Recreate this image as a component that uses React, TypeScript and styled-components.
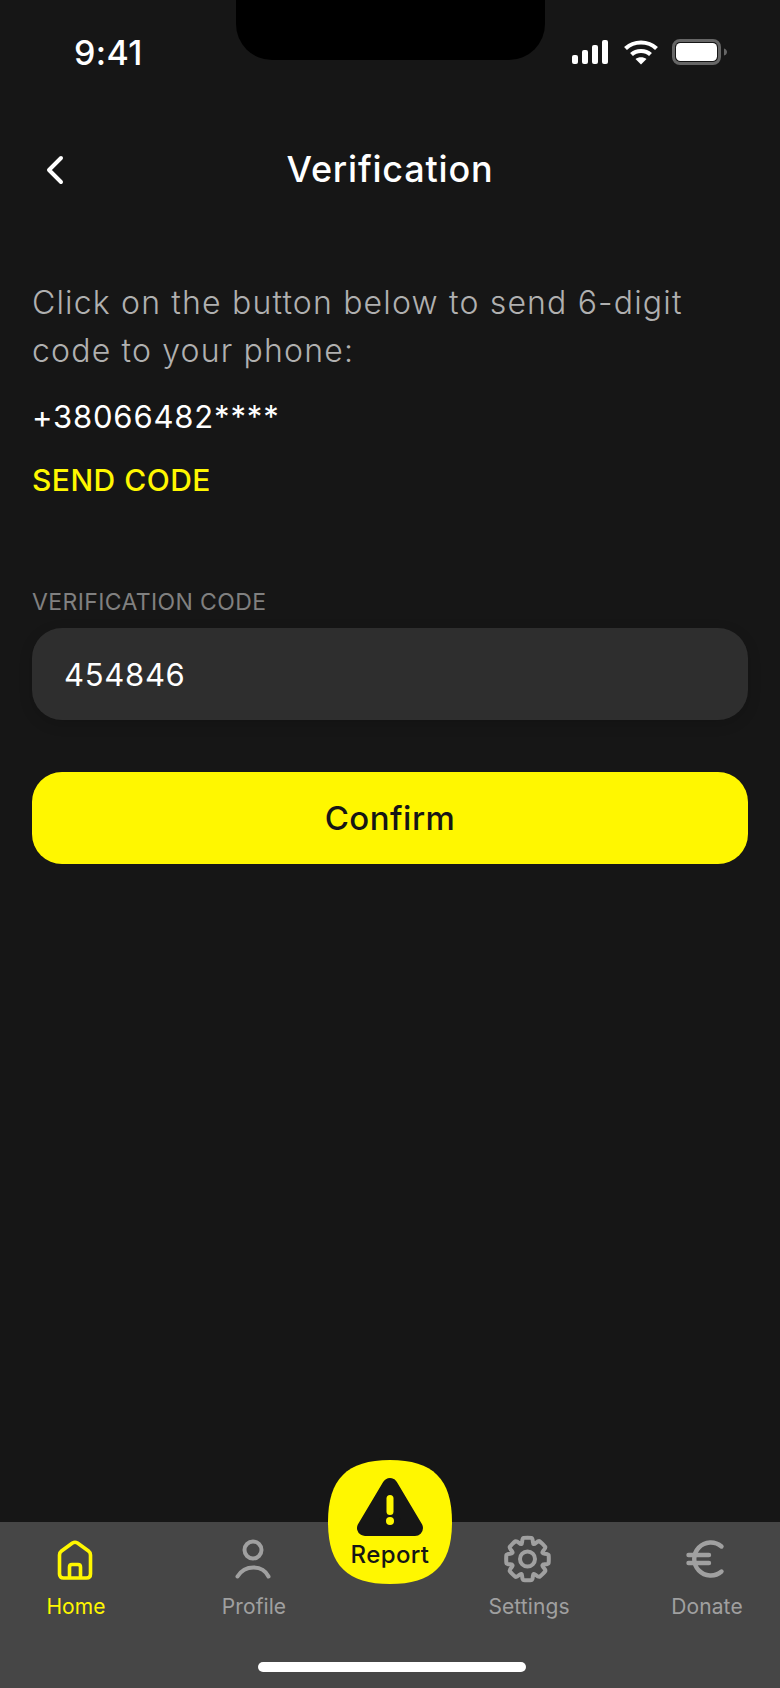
import styled, { createGlobalStyle } from "styled-components";

const YELLOW = "#fff700";
const MUTED = "#a0a0a0";

const GlobalStyle = createGlobalStyle`
  html, body {
    margin: 0;
    padding: 0;
    background: #161616;
  }
  * {
    box-sizing: border-box;
  }
`;

const Page = styled.div`
  position: relative;
  display: flex;
  flex-direction: column;
  width: 780px;
  height: 1688px;
  overflow: hidden;
  background: #161616;
  color: #fff;
  font-family: Inter, "Open Sans", sans-serif;
`;

const Notch = styled.div`
  position: absolute;
  top: 0;
  left: 236px;
  width: 309px;
  height: 60px;
  background: #000;
  border-radius: 0 0 36px 36px;
`;

const StatusBar = styled.div`
  display: flex;
  align-items: center;
  justify-content: space-between;
  height: 104px;
  padding: 0 52px 0 74px;
`;

const Clock = styled.span`
  font-size: 34px;
  font-weight: 500;
  letter-spacing: 0.4px;
`;

const StatusIcons = styled.div`
  display: flex;
  align-items: center;
`;

const Header = styled.header`
  position: relative;
  display: flex;
  align-items: center;
  justify-content: center;
  height: 132px;
  padding-bottom: 2px;
`;

const BackButton = styled.button`
  position: absolute;
  left: 44px;
  top: 50px;
  padding: 0;
  border: 0;
  background: none;
  display: flex;
`;

const Title = styled.h1`
  margin: 0;
  font-size: 36px;
  font-weight: 500;
  letter-spacing: 0.8px;
`;

const Main = styled.main`
  display: flex;
  flex-direction: column;
  padding: 43px 32px 0;
`;

const Intro = styled.p`
  margin: 0;
  font-size: 32px;
  font-weight: 300;
  letter-spacing: 1.17px;
  line-height: 48px;
  color: #b0b0b0;
`;

const Phone = styled.div`
  margin-top: 22px;
  font-size: 31px;
  letter-spacing: 0.83px;
  line-height: 40px;
`;

const SendCode = styled.a`
  margin-top: 23px;
  font-size: 30px;
  font-weight: 500;
  letter-spacing: 0.48px;
  line-height: 40px;
  color: ${YELLOW};
`;

const FieldLabel = styled.label`
  margin-top: 87px;
  font-size: 23px;
  letter-spacing: 0.38px;
  line-height: 30px;
  color: #808080;
`;

const Field = styled.div`
  display: flex;
  align-items: center;
  height: 92px;
  margin-top: 11px;
  padding: 0 32px;
  border-radius: 30px;
  background: #2e2e2e;
  box-shadow: 0 4px 14px rgba(0, 0, 0, 0.15);
  font-size: 31px;
  letter-spacing: 0.7px;
`;

const ConfirmButton = styled.button`
  height: 92px;
  margin-top: 52px;
  border: 0;
  border-radius: 30px;
  background: ${YELLOW};
  color: #161616;
  font-family: inherit;
  font-size: 33px;
  font-weight: 500;
  letter-spacing: 0.46px;
`;

const TabBar = styled.nav`
  position: relative;
  margin-top: auto;
  height: 166px;
  padding-top: 12px;
  background: #464646;
`;

const Tabs = styled.div`
  display: grid;
  grid-template-columns: 152px 204px 68px 210px 146px;
`;

const Tab = styled.div<{ $active?: boolean }>`
  display: flex;
  flex-direction: column;
  align-items: center;
  gap: 10px;
  font-size: 21px;
  line-height: 30px;
  letter-spacing: 0.1px;
  color: ${(p) => (p.$active ? YELLOW : MUTED)};

  svg {
    display: block;
    overflow: visible;
  }
`;

const ReportButton = styled.button`
  position: absolute;
  left: 328px;
  top: -62px;
  display: flex;
  flex-direction: column;
  align-items: center;
  width: 124px;
  height: 124px;
  padding: 17px 0 0;
  border: 0;
  background: ${YELLOW};
  clip-path: path("M62 0C105 0 124 19 124 62C124 105 105 124 62 124C19 124 0 105 0 62C0 19 19 0 62 0Z");
  color: #161616;
  font-family: inherit;
  font-size: 24px;
  font-weight: 500;
  letter-spacing: 0.4px;
  line-height: 32px;

  span {
    margin-top: 2px;
  }
`;

const HomeIndicator = styled.div`
  width: 268px;
  height: 10px;
  margin: 40px 0 0 258px;
  border-radius: 5px;
  background: #fff;
`;

const gearPath = (() => {
  const teeth = 8;
  const pts: [number, number][] = [];
  for (let i = 0; i < teeth; i++) {
    const a = (i / teeth) * Math.PI * 2 - Math.PI / 2;
    const step = Math.PI / teeth;
    const rows: [number, number][] = [
      [a - step * 0.62, 21.5],
      [a - step * 0.34, 21.5],
      [a + step * 0.34, 21.5],
      [a + step * 0.62, 21.5],
      [a + step, 14.5],
    ];
    rows.forEach(([ang, r]) => pts.push([22.5 + r * Math.cos(ang), 25 + r * Math.sin(ang)]));
  }
  let d = "";
  pts.forEach((p, i) => {
    const next = pts[(i + 1) % pts.length];
    const mid = [(p[0] + next[0]) / 2, (p[1] + next[1]) / 2];
    if (i === 0) {
      const prev = pts[pts.length - 1];
      d += `M${((prev[0] + p[0]) / 2).toFixed(2)} ${((prev[1] + p[1]) / 2).toFixed(2)}`;
    }
    d += `Q${p[0].toFixed(2)} ${p[1].toFixed(2)} ${mid[0].toFixed(2)} ${mid[1].toFixed(2)}`;
  });
  return d + "Z";
})();

const Signal = () => (
  <svg width="36" height="24" viewBox="0 0 36 24" fill="#fff">
    <rect x="0" y="15" width="6" height="9" rx="2" />
    <rect x="10" y="10" width="6" height="14" rx="2" />
    <rect x="20" y="5" width="6" height="19" rx="2" />
    <rect x="30" y="0" width="6" height="24" rx="2" />
  </svg>
);

const Wifi = () => (
  <svg width="36" height="26" viewBox="0 0 36 26" fill="none" stroke="#fff" strokeWidth="4.2" style={{ marginLeft: 15 }}>
    <path d="M2.5 9.5C11 1.5 25 1.5 33.5 9.5" />
    <path d="M8.5 15.5C13.5 10.8 22.5 10.8 27.5 15.5" />
    <path d="M12.5 20L18 25.5L23.5 20C20.5 17.5 15.5 17.5 12.5 20Z" fill="#fff" stroke="none" />
  </svg>
);

const Battery = () => (
  <svg width="56" height="26" viewBox="0 0 56 26" style={{ marginLeft: 13 }}>
    <rect x="1.5" y="1.5" width="46" height="23" rx="6.5" fill="none" stroke="#666" strokeWidth="3" />
    <rect x="4" y="4" width="41" height="18" rx="4.5" fill="#fff" />
    <path d="M52 9.5C54 10 55 11.5 55 13C55 14.5 54 16 52 16.5Z" fill="#666" />
  </svg>
);

const HomeIcon = () => (
  <svg width="48" height="48" viewBox="0 0 48 48" fill="none" stroke="currentColor" strokeWidth="3.6" strokeLinejoin="round">
    <path d="M7.5 21Q7.5 18.5 9.5 17L20.5 9Q23 7.5 25.5 9L36.5 17Q38.5 18.5 38.5 21V40Q38.5 44 34.5 44H11.5Q7.5 44 7.5 40Z" />
    <path d="M17.5 44V33Q17.5 30.5 20 30.5H26Q28.5 30.5 28.5 33V44" />
  </svg>
);

const ProfileIcon = () => (
  <svg width="48" height="48" viewBox="0 0 48 48" fill="none" stroke="currentColor" strokeWidth="4" strokeLinecap="round">
    <circle cx="23" cy="16" r="8.5" />
    <path d="M7.5 42.5Q13 33.5 23.5 33.5Q34 33.5 38.5 42.5" />
  </svg>
);

const SettingsIcon = () => (
  <svg width="48" height="48" viewBox="0 0 48 48" fill="none" stroke="currentColor" strokeWidth="4">
    <path d={gearPath} strokeLinejoin="round" />
    <circle cx="22.5" cy="25" r="7.5" />
  </svg>
);

const EuroIcon = () => (
  <svg width="48" height="48" viewBox="0 0 48 48" fill="none" stroke="currentColor" strokeWidth="4.4" strokeLinecap="round">
    <path d="M38.5 12.5A16.5 16.5 0 1 0 38.5 37.5" />
    <path d="M5.5 21H26M5.5 29H26" />
  </svg>
);

const WarningIcon = () => (
  <svg width="68" height="60" viewBox="0 0 68 60">
    <path d="M34 9L9 51H59Z" fill="#161616" stroke="#161616" strokeWidth="16" strokeLinejoin="round" />
    <rect x="30.5" y="18" width="7" height="20" rx="3.5" fill={YELLOW} />
    <circle cx="34" cy="44" r="4" fill={YELLOW} />
  </svg>
);

export default function App() {
  return (
    <Page>
      <GlobalStyle />
      <Notch />
      <StatusBar>
        <Clock>9:41</Clock>
        <StatusIcons>
          <Signal />
          <Wifi />
          <Battery />
        </StatusIcons>
      </StatusBar>
      <Header>
        <BackButton aria-label="Back">
          <svg width="24" height="32" viewBox="0 0 24 32" fill="none" stroke="#fff" strokeWidth="4" strokeLinecap="round" strokeLinejoin="round">
            <path d="M17 4L5 16L17 28" />
          </svg>
        </BackButton>
        <Title>Verification</Title>
      </Header>
      <Main>
        <Intro>
          Click on the button below to send 6-digit
          <br />
          code to your phone:
        </Intro>
        <Phone>+38066482****</Phone>
        <SendCode>SEND CODE</SendCode>
        <FieldLabel>VERIFICATION CODE</FieldLabel>
        <Field>454846</Field>
        <ConfirmButton>Confirm</ConfirmButton>
      </Main>
      <TabBar>
        <Tabs>
          <Tab $active>
            <HomeIcon />
            Home
          </Tab>
          <Tab>
            <ProfileIcon />
            Profile
          </Tab>
          <div />
          <Tab>
            <SettingsIcon />
            Settings
          </Tab>
          <Tab>
            <EuroIcon />
            Donate
          </Tab>
        </Tabs>
        <ReportButton>
          <WarningIcon />
          <span>Report</span>
        </ReportButton>
        <HomeIndicator />
      </TabBar>
    </Page>
  );
}
